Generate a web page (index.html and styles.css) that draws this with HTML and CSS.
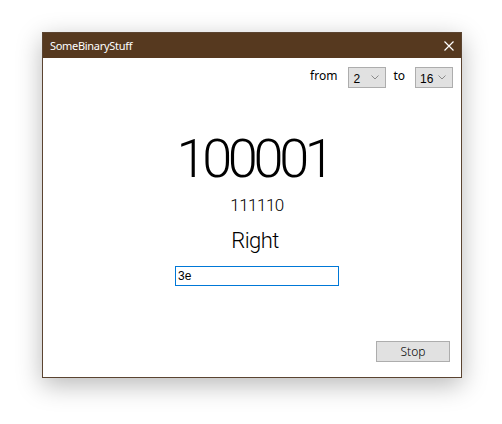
FILE: index.html
```html
<!DOCTYPE html>
<html>
<head>
<meta charset="utf-8">
<link rel="stylesheet" href="styles.css">
</head>
<body>
<div class="window">
  <div class="titlebar">
    <span class="title">SomeBinaryStuff</span>
    <svg class="close" width="10" height="10" viewBox="0 0 10 10"><path d="M0.5 0.5 L9.5 9.5 M9.5 0.5 L0.5 9.5" stroke="#fff" stroke-width="1.2" fill="none"/></svg>
  </div>
  <div class="content">
    <div class="bases">
      <span class="lbl">from</span>
      <div class="combo"><span>2</span><svg width="8" height="5" viewBox="0 0 8 5"><path d="M0.5 0.5 L4 4 L7.5 0.5" stroke="#8a8a8a" fill="none"/></svg></div>
      <span class="lbl">to</span>
      <div class="combo"><span>16</span><svg width="8" height="5" viewBox="0 0 8 5"><path d="M0.5 0.5 L4 4 L7.5 0.5" stroke="#8a8a8a" fill="none"/></svg></div>
    </div>
    <div class="big">100001</div>
    <div class="mid">111110</div>
    <div class="result">Right</div>
    <input class="answer" type="text" value="3e">
    <div class="actions">
      <button class="stop">Stop</button>
    </div>
  </div>
</div>
</body>
</html>
```

FILE: styles.css
```css
html, body {
  margin: 0;
  padding: 0;
  background: #ffffff;
}
body {
  width: 502px;
  height: 424px;
  overflow: hidden;
}
.window {
  margin: 32px 0 0 42px;
  width: 420px;
  height: 346px;
  box-sizing: border-box;
  border: 1px solid #5b4431;
  background: #fff;
  display: flex;
  flex-direction: column;
  box-shadow: 0 7px 24px rgba(0, 0, 0, 0.28);
}
.titlebar {
  height: 25px;
  background: #56391f;
  display: flex;
  align-items: center;
  justify-content: space-between;
  padding: 0 7px 0 7px;
  box-sizing: border-box;
}
.title {
  color: #fff;
  font-family: "Noto Sans", sans-serif;
  font-size: 11px;
  letter-spacing: -0.3px;
}
.close {
  display: block;
  margin-top: 1px;
}
.content {
  flex: 1;
  display: flex;
  flex-direction: column;
  align-items: center;
  padding: 9px 8px 15px 18px;
}
.bases {
  align-self: flex-end;
  display: flex;
  align-items: center;
  height: 21px;
}
.lbl {
  font-family: "Noto Sans", sans-serif;
  font-size: 12px;
  color: #000;
  margin: -5px 0 0 0;
}
.lbl:first-child { margin-right: 11px; }
.combo + .lbl { margin-left: 7px; margin-right: 10px; }
.combo {
  width: 38px;
  height: 21px;
  box-sizing: border-box;
  border: 1px solid #adadad;
  background: #e1e1e1;
  display: flex;
  align-items: center;
  justify-content: space-between;
  padding: 0 6px 0 4px;
  font-family: "Liberation Sans", sans-serif;
  font-size: 12px;
  color: #000;
}
.combo span { margin-top: 2px; }
.big {
  font-family: Roboto, sans-serif;
  font-weight: 300;
  font-size: 54px;
  line-height: 54px;
  letter-spacing: -4.3px;
  margin: 44px 11px 0 0;
  padding-left: 4px;
  color: #000;
}
.mid {
  font-family: Roboto, sans-serif;
  font-weight: 300;
  font-size: 17px;
  line-height: 20px;
  letter-spacing: -0.5px;
  margin-top: 9px;
  color: #000;
}
.result {
  font-family: Roboto, sans-serif;
  font-weight: 300;
  font-size: 22px;
  line-height: 26px;
  letter-spacing: -0.6px;
  margin: 13px 4px 0 0;
  color: #000;
}
.answer {
  width: 164px;
  height: 20px;
  box-sizing: border-box;
  border: 1px solid #0078d7;
  outline: none;
  margin: 12px 0 0 0;
  padding: 0 2px;
  font-family: "Liberation Sans", sans-serif;
  font-size: 12px;
  color: #000;
  background: #fff;
}
.actions {
  margin-top: auto;
  align-self: flex-end;
  display: flex;
}
.stop {
  width: 74px;
  height: 21px;
  box-sizing: border-box;
  border: 1px solid #adadad;
  background: #e1e1e1;
  font-family: "Noto Sans", sans-serif;
  font-size: 12px;
  font-weight: 300;
  color: #000;
  padding: 0;
  margin-right: 3px;
}
```
